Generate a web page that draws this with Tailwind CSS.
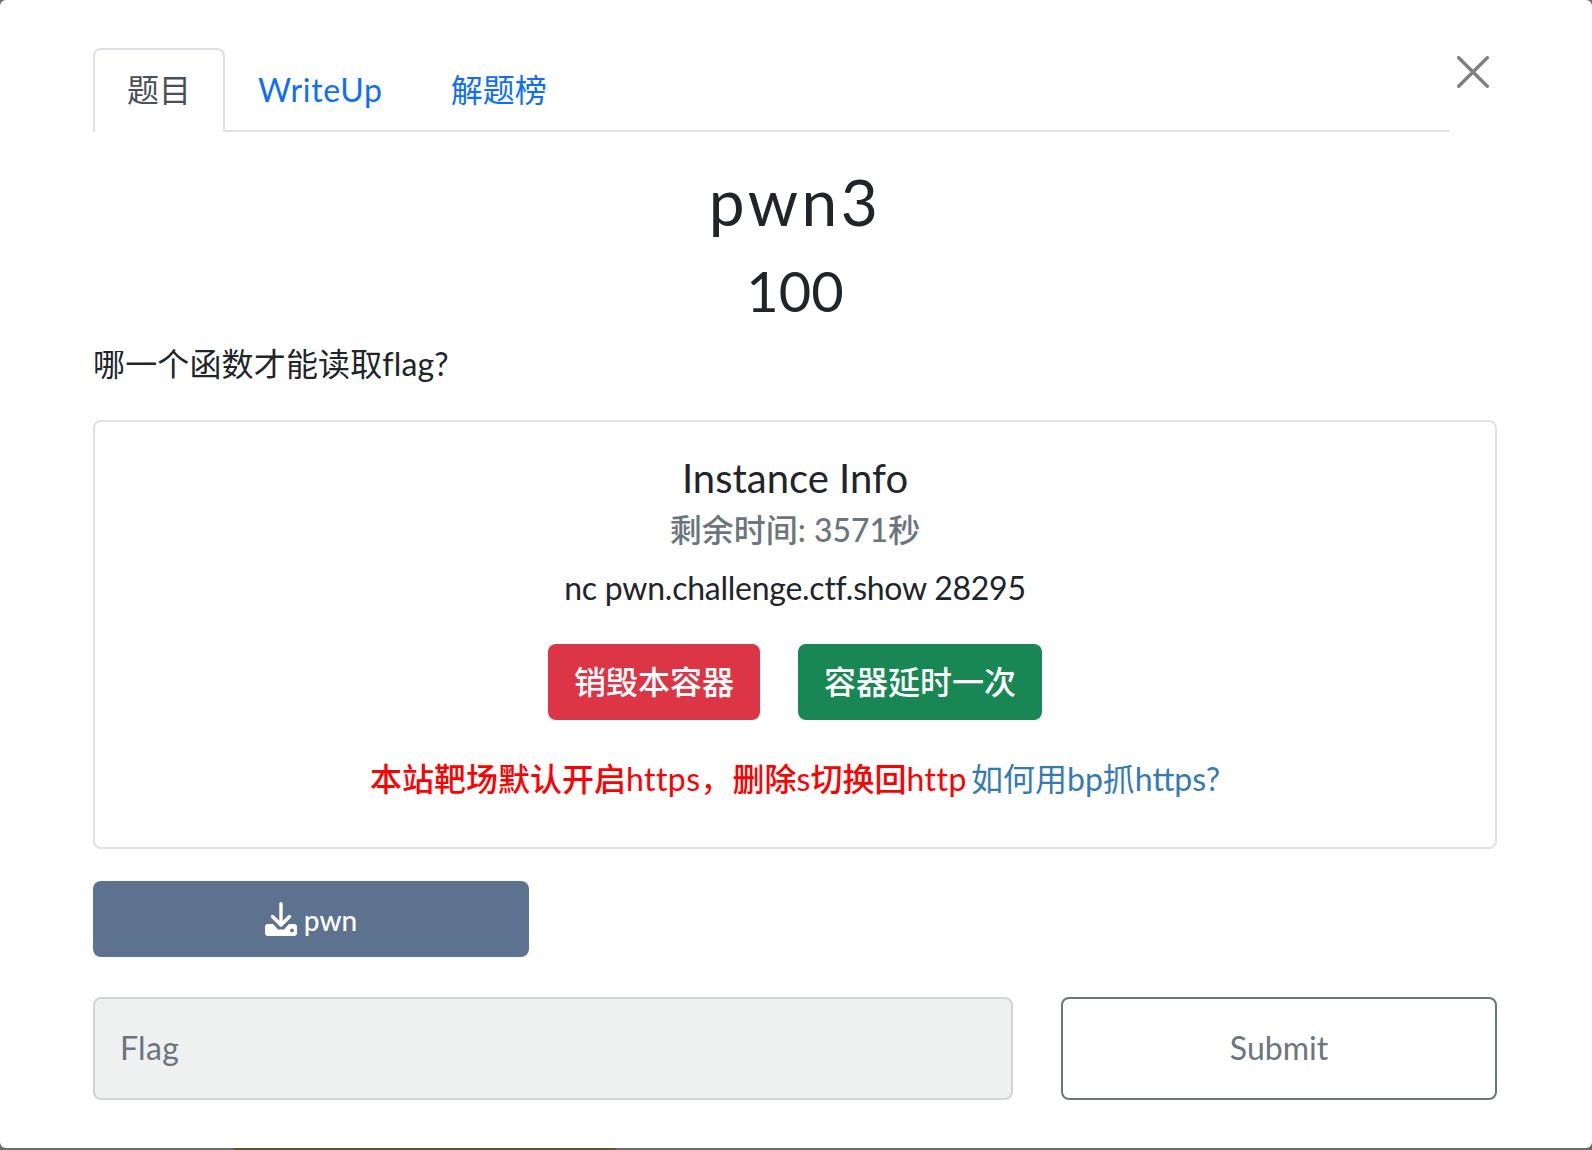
<!doctype html>
<html lang="en">
  <head>
    <meta charset="UTF-8" />
    <meta name="viewport" content="width=device-width, initial-scale=1.0" />
    <title>pwn3</title>
    <script src="https://cdn.jsdelivr.net/npm/@tailwindcss/browser@4"></script>
  </head>
  <body class="h-[1150px] overflow-hidden bg-[#6b6b6b] font-['Lato','Noto_Sans_CJK_SC',sans-serif] text-[#212529]">
    <div class="h-[1148px] rounded-[6px] bg-white pt-[48px] pl-[93px] pr-[95px]">
      <!-- tabs -->
      <div class="flex items-start">
        <ul class="flex flex-1 h-[84px] border-b-2 border-[#dee2e6] text-[32px] leading-[48px]">
          <li class="h-[84px] w-[132px] shrink-0 rounded-t-[8px] border-2 border-b-0 border-[#dee2e6] bg-white pt-[16px] text-center text-[#495057]">题目</li>
          <li class="ml-[33px] pt-[18px] tracking-[0.7px] text-[#0d6efd]">WriteUp</li>
          <li class="ml-[68px] pt-[18px] text-[#0d6efd]">解题榜</li>
        </ul>
        <button class="mt-[8px] w-[48px] shrink-0">
          <svg class="h-[32px] w-[32px] ml-[8px]" viewBox="0 0 32 32" fill="none" stroke="#7f7f7f" stroke-width="3.4" stroke-linecap="round"><path d="M1.7 1.7 30.3 30.3M30.3 1.7 1.7 30.3" /></svg>
        </button>
      </div>

      <h1 class="mt-[30px] text-center text-[64px] leading-[80px] tracking-[3.5px]">pwn3</h1>
      <h2 class="mt-[15px] text-center text-[56px] leading-[68px]">100</h2>
      <p class="mt-[15px] text-[32px] leading-[48px] tracking-[0.15px]">哪一个函数才能读取flag?</p>

      <!-- instance card -->
      <div class="mt-[32px] h-[429px] rounded-[8px] border-2 border-[#dee2e6] pt-[32px] text-center">
        <h4 class="text-[40px] leading-[48px]">Instance Info</h4>
        <h6 class="mt-[4px] text-[32px] leading-[48px] font-medium text-[#6c757d]">剩余时间: 3571秒</h6>
        <p class="mt-[10px] text-[32px] leading-[48px] tracking-[-0.25px]">nc pwn.challenge.ctf.show 28295</p>
        <div class="mt-[32px] flex justify-center gap-[38px]">
          <button class="h-[76px] w-[212px] rounded-[8px] bg-[#dc3545] text-[32px] font-medium text-white">销毁本容器</button>
          <button class="h-[76px] w-[244px] rounded-[8px] bg-[#198754] text-[32px] font-medium text-white">容器延时一次</button>
        </div>
        <p class="mt-[35px] text-[32px] leading-[48px]"><span class="text-[#ff0000]"><span class="font-medium">本站靶场默认开启</span><span class="tracking-[0.45px]">https</span>，<span class="font-medium">删除</span>s<span class="font-medium">切换回</span><span class="tracking-[0.45px]">http</span></span> <a class="-ml-[4px] text-[#337ab7]">如何用bp抓https?</a></p>
      </div>

      <button class="mt-[32px] flex h-[76px] w-[436px] items-center justify-center gap-[7px] rounded-[8px] bg-[#5c728e] text-[28px] text-white">
        <svg class="h-[34px] w-[32px]" viewBox="0 0 32 34" fill="white"><path d="M16 1.700v19" stroke="white" stroke-width="3.400" stroke-linecap="round" fill="none" /><path d="M7.500 14.500l8.500 8.500 8.500-8.500" stroke="white" stroke-width="3.400" stroke-linecap="round" stroke-linejoin="round" fill="none" /><path fill-rule="evenodd" d="M3 22h5l5 5.500h6l5-5.500h5a3 3 0 0 1 3 3v6a3 3 0 0 1-3 3H3a3 3 0 0 1-3-3v-6a3 3 0 0 1 3-3zM27 26.500a1.900 1.900 0 1 0 0 3.800 1.900 1.900 0 0 0 0-3.800z" /></svg>
        <span class="pt-[2px] font-medium">pwn</span>
      </button>

      <div class="mt-[40px] flex gap-[48px]">
        <input placeholder="Flag" class="h-[103px] flex-1 rounded-[8px] border-2 border-[#d2d4d5] bg-[#eff0f0] px-[25px] pb-[2px] text-[32px] tracking-[0.3px] placeholder:text-[#6c757d]" />
        <button class="h-[103px] w-[436px] rounded-[8px] border-2 border-[#6c757d] pb-[2px] text-[32px] text-[#6c757d]">Submit</button>
      </div>
    </div>
    <!-- what shows under the modal -->
    <div class="flex h-[2px]">
      <div class="w-[234px]"></div>
      <div class="w-[382px] bg-[#5f5430]"></div>
    </div>
  </body>
</html>
